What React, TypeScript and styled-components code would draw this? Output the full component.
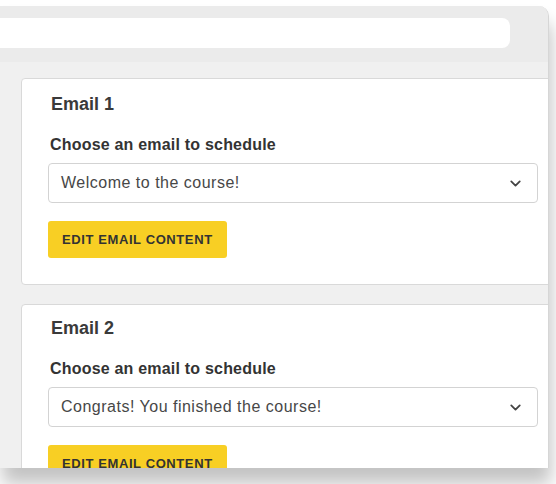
import styled, { createGlobalStyle } from 'styled-components';
import { ChevronDown } from 'lucide-react';

const GlobalStyle = createGlobalStyle`
  html, body {
    margin: 0;
    padding: 0;
    background: #ffffff;
    font-family: "Liberation Sans", Arial, sans-serif;
  }
`;

const Stage = styled.div`
  width: 556px;
  height: 484px;
  overflow: hidden;
  background: #ffffff;
  padding-top: 6px;
  box-sizing: border-box;
`;

const Window = styled.div`
  width: 549px;
  height: 462px;
  box-sizing: border-box;
  overflow: hidden;
  background: #f0f0f0;
  border-right: 1px solid #d6d6d6;
  border-top-right-radius: 10px;
  box-shadow: 2px 16px 18px rgba(0, 0, 0, 0.24);
  display: flex;
  flex-direction: column;
`;

const Toolbar = styled.div`
  height: 56px;
  flex-shrink: 0;
  background: #ebebeb;
  padding: 12px 38px 0 0;
  box-sizing: border-box;
`;

const UrlBar = styled.div`
  height: 30px;
  background: #ffffff;
  border-radius: 0 8px 8px 0;
`;

const Content = styled.div`
  padding: 16px 0 0 21px;
  display: flex;
  flex-direction: column;
  gap: 19px;
`;

const Card = styled.div`
  width: 545px;
  flex-shrink: 0;
  box-sizing: border-box;
  background: #ffffff;
  border: 1px solid #d9d9d9;
  border-radius: 4px;
  padding: ${(p: { $top: number }) => p.$top}px 27px 26px 26px;
`;

const Title = styled.h2`
  margin: 0 0 0 3px;
  font-size: 18px;
  line-height: 22px;
  font-weight: 700;
  color: #3a3a3a;
`;

const Label = styled.div`
  margin: 20px 0 8px 2px;
  font-size: 16px;
  line-height: 20px;
  font-weight: 700;
  color: #333333;
  letter-spacing: 0.2px;
`;

const Select = styled.div`
  height: 40px;
  box-sizing: border-box;
  border: 1px solid #d3d3d3;
  border-radius: 4px;
  display: flex;
  align-items: center;
  justify-content: space-between;
  padding: 0 13px 0 12px;
  font-size: 16px;
  letter-spacing: 0.5px;
  color: #474747;
`;

const EditButton = styled.button`
  margin-top: 18px;
  height: 37px;
  padding: 0 14px;
  border: none;
  border-radius: 3px;
  background: #f8cf24;
  color: #333333;
  font-family: "Liberation Sans", Arial, sans-serif;
  font-size: 13px;
  font-weight: 700;
  letter-spacing: 0.6px;
`;

const emails = [
  { name: 'Email 1', value: 'Welcome to the course!', top: 14 },
  { name: 'Email 2', value: 'Congrats! You finished the course!', top: 12 },
];

const App = () => {
  return (
    <Stage>
      <GlobalStyle />
      <Window>
        <Toolbar>
          <UrlBar />
        </Toolbar>
        <Content>
          {emails.map((e) => (
            <Card key={e.name} $top={e.top}>
              <Title>{e.name}</Title>
              <Label>Choose an email to schedule</Label>
              <Select>
                <span>{e.value}</span>
                <ChevronDown size={17} strokeWidth={2.5} color="#444" />
              </Select>
              <EditButton>EDIT EMAIL CONTENT</EditButton>
            </Card>
          ))}
        </Content>
      </Window>
    </Stage>
  );
};

export default App;
